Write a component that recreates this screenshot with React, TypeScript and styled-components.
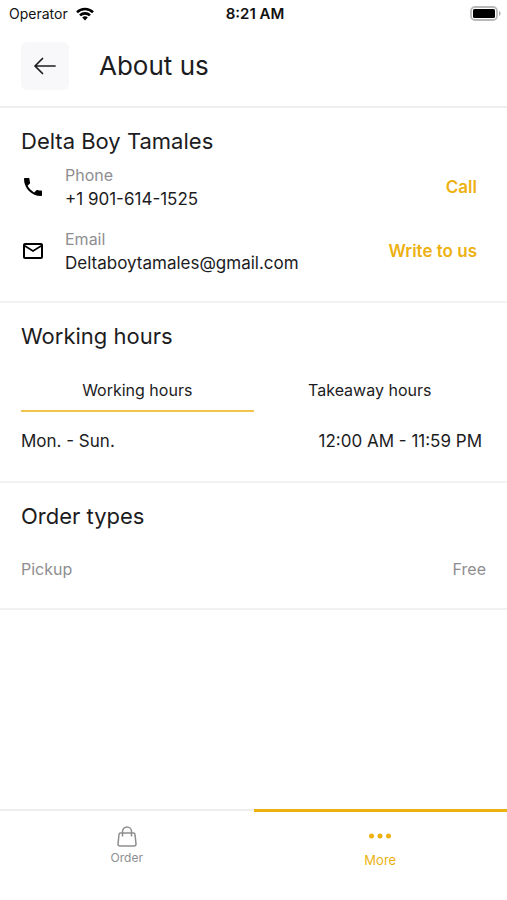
import React, { useState } from "react";
import styled, { createGlobalStyle } from "styled-components";

const GlobalStyle = createGlobalStyle`
  *, *::before, *::after { box-sizing: border-box; }
  body { margin: 0; background: #fff; color: #1c1c1e; font-family: Inter, "Noto Sans", sans-serif; font-size: 16px; line-height: 24px; }
  button { font: inherit; color: inherit; background: none; border: 0; padding: 0; cursor: pointer; }
  h1, h2, p { margin: 0; font-weight: 400; }
`;

const Screen = styled.div`
  min-height: 100vh;
  display: flex;
  flex-direction: column;
`;

const StatusBar = styled.div`
  display: grid;
  grid-template-columns: 1fr auto 1fr;
  align-items: center;
  height: 28px;
  padding: 0 6px 0 9px;
  font-size: 14px;
  color: #111;
`;

const Carrier = styled.div`
  display: flex;
  align-items: center;
  gap: 8px;
`;

const Clock = styled.time`
  font-size: 15px;
  font-weight: 600;
`;

const Battery = styled.svg`
  justify-self: end;
`;

const Header = styled.header`
  display: flex;
  align-items: center;
  gap: 30px;
  height: 80px;
  padding: 0 21px 2px;
  border-bottom: 2px solid #eeeeef;
`;

const BackButton = styled.button`
  display: grid;
  place-items: center;
  width: 48px;
  height: 48px;
  border-radius: 6px;
  background: #f8f8fa;
`;

const Title = styled.h1`
  font-size: 26px;
  line-height: 32px;
`;

const Section = styled.section`
  padding: 19px 21px 18px;
  border-bottom: 2px solid #f2f2f3;
`;

const Heading = styled.h2`
  font-size: 22px;
  line-height: 28px;
`;

const Contact = styled.div`
  display: flex;
  align-items: center;
  height: 64px;
  padding-right: 9px;
`;

const ContactIcon = styled.svg`
  width: 24px;
  height: 24px;
  margin-right: 20px;
`;

const ContactText = styled.div`
  flex: 1;
`;

const Label = styled.p`
  color: #8e8e90;
`;

const Value = styled.p`
  font-size: 17px;
`;

const Action = styled.a`
  color: #edb112;
  font-size: 17px;
  font-weight: 600;
  text-decoration: none;
`;

const Tabs = styled.div`
  display: flex;
  margin-top: 20px;
`;

const Tab = styled.button<{ $active: boolean }>`
  flex: 1;
  height: 42px;
  border-bottom: 2px solid ${(p) => (p.$active ? "#f2c44c" : "transparent")};
`;

const Row = styled.div`
  display: flex;
  justify-content: space-between;
`;

const HoursRow = styled(Row)`
  padding: 17px 4px 10px 0;
  font-size: 17px;
`;

const OrderTypeRow = styled(Row)`
  padding: 27px 0 9px;
  color: #8e8e90;
`;

const BottomNav = styled.nav`
  display: flex;
  height: 91px;
  margin-top: auto;
`;

const NavItem = styled.button<{ $active: boolean }>`
  flex: 1;
  display: flex;
  flex-direction: column;
  align-items: center;
  padding-top: ${(p) => (p.$active ? "12px" : "14px")};
  border-top: ${(p) => (p.$active ? "3px solid #edb112" : "2px solid #eeeeef")};
  color: ${(p) => (p.$active ? "#edb112" : "#8e8e90")};
  font-size: ${(p) => (p.$active ? "13px" : "12px")};
  line-height: 18px;
  gap: ${(p) => (p.$active ? "3px" : "0")};
`;

const hours: Record<string, string> = {
  "Working hours": "12:00 AM - 11:59 PM",
  "Takeaway hours": "12:00 AM - 11:59 PM",
};

export default function App() {
  const [tab, setTab] = useState("Working hours");
  const [page, setPage] = useState("More");
  return (
    <>
      <GlobalStyle />
      <Screen>
        <StatusBar>
          <Carrier>
            Operator
            <svg width="18" height="14" viewBox="0 0 18 14" fill="none" stroke="#000" strokeWidth="2.6">
              <path d="M1 5.2a11.5 11.5 0 0 1 16 0M4 8.400a7.200 7.200 0 0 1 10 0" />
              <path d="M9 13.400 6.200 10.600a4 4 0 0 1 5.600 0z" fill="#000" stroke="none" />
            </svg>
          </Carrier>
          <Clock>8:21 AM</Clock>
          <Battery width="31" height="16" viewBox="0 0 31 16">
            <rect x="1" y="1" width="26" height="13" rx="4" fill="#fff" stroke="#b9b9b9" strokeWidth="1.8" />
            <rect x="3" y="3" width="22" height="9" rx="1.5" />
            <path d="M29 5c2.200.8 2.200 4.200 0 5z" fill="#b0b0b0" />
          </Battery>
        </StatusBar>
        <Header>
          <BackButton aria-label="Back">
            <svg width="24" height="20" viewBox="0 0 24 20" fill="none" stroke="#1c1c1e" strokeWidth="1.7" strokeLinecap="round" strokeLinejoin="round">
              <path d="M22 10H2M9.500 2.500 2 10l7.500 7.500" />
            </svg>
          </BackButton>
          <Title>About us</Title>
        </Header>
        <main>
          <Section>
            <Heading>Delta Boy Tamales</Heading>
            <Contact>
              <ContactIcon viewBox="0 0 24 24">
                <path d="M6.620 10.790c1.440 2.830 3.760 5.140 6.590 6.590l2.200-2.200c.27-.27.67-.36 1.020-.24 1.120.37 2.330.57 3.570.57.55 0 1 .45 1 1V20c0 .55-.45 1-1 1C10.610 21 3 13.390 3 4c0-.55.45-1 1-1h3.500c.55 0 1 .45 1 1 0 1.250.2 2.450.57 3.570.11.35.03.74-.25 1.020z" />
              </ContactIcon>
              <ContactText>
                <Label>Phone</Label>
                <Value>+1 901-614-1525</Value>
              </ContactText>
              <Action href="tel:+19016141525">Call</Action>
            </Contact>
            <Contact>
              <ContactIcon viewBox="0 0 24 24">
                <path d="M22 6c0-1.100-.9-2-2-2H4c-1.100 0-2 .9-2 2v12c0 1.100.9 2 2 2h16c1.100 0 2-.9 2-2V6zm-2 0-8 5-8-5h16zm0 12H4V8l8 5 8-5v10z" />
              </ContactIcon>
              <ContactText>
                <Label>Email</Label>
                <Value>Deltaboytamales@gmail.com</Value>
              </ContactText>
              <Action href="mailto:Deltaboytamales@gmail.com">Write to us</Action>
            </Contact>
          </Section>
          <Section>
            <Heading>Working hours</Heading>
            <Tabs role="tablist">
              {Object.keys(hours).map((name) => (
                <Tab key={name} role="tab" aria-selected={tab === name} $active={tab === name} onClick={() => setTab(name)}>
                  {name}
                </Tab>
              ))}
            </Tabs>
            <HoursRow>
              <span>Mon. - Sun.</span>
              <span>{hours[tab]}</span>
            </HoursRow>
          </Section>
          <Section>
            <Heading>Order types</Heading>
            <OrderTypeRow>
              <span>Pickup</span>
              <span>Free</span>
            </OrderTypeRow>
          </Section>
        </main>
        <BottomNav>
          <NavItem $active={page === "Order"} onClick={() => setPage("Order")}>
            <svg width="24" height="24" viewBox="0 0 24 24" fill="none" stroke="currentColor" strokeWidth="1.5">
              <path d="M5.500 8h13a1.500 1.500 0 0 1 1.500 1.400l1 9.600a2 2 0 0 1-2 2H5a2 2 0 0 1-2-2l1-9.600A1.500 1.500 0 0 1 5.500 8zM7.500 11.500V6.500a4.500 4.500 0 0 1 9 0v5" />
            </svg>
            Order
          </NavItem>
          <NavItem $active={page === "More"} onClick={() => setPage("More")}>
            <svg width="24" height="24" viewBox="0 0 24 24" fill="currentColor">
              <circle cx="3.500" cy="12" r="2.500" />
              <circle cx="12" cy="12" r="2.500" />
              <circle cx="20.500" cy="12" r="2.500" />
            </svg>
            More
          </NavItem>
        </BottomNav>
      </Screen>
    </>
  );
}
